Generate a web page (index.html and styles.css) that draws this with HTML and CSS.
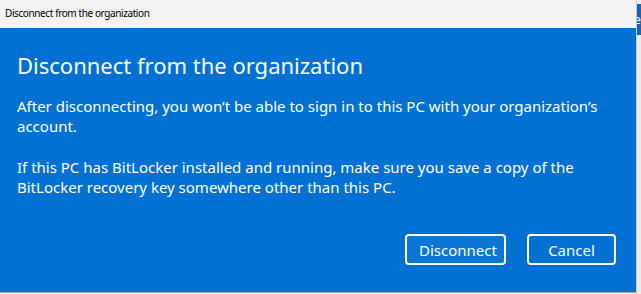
FILE: index.html
```html
<!DOCTYPE html>
<html lang="en">
<head>
    <meta charset="UTF-8">
    <meta name="viewport" content="width=device-width, initial-scale=1.0">
    <title>Disconnect from the organization</title>
    <link rel="stylesheet" href="styles.css">
</head>
<body>
    <div class="screen">
        <div class="window">
            <div class="title-bar">Disconnect from the organization</div>
            <div class="dialog">
                <h1>Disconnect from the organization</h1>
                <p>After disconnecting, you won’t be able to sign in to this PC with your organization’s account.</p>
                <p>If this PC has BitLocker installed and running, make sure you save a copy of the BitLocker recovery key somewhere other than this PC.</p>
                <div class="actions">
                    <button class="btn btn-primary">Disconnect</button>
                    <button class="btn">Cancel</button>
                </div>
            </div>
        </div>
        <div class="behind">
            <div class="behind-tab">e</div>
        </div>
    </div>
</body>
</html>
```

FILE: styles.css
```css
body {
    margin: 0;
    background-color: #f0f0f0;
    font-family: "Segoe UI", "Noto Sans", Arial, sans-serif;
}

.screen {
    display: flex;
    width: 641px;
    height: 294px;
    overflow: hidden;
}

.window {
    width: 637px;
    height: 292px;
    display: flex;
    flex-direction: column;
    border-bottom: 1px solid #a8a8a8;
}

.title-bar {
    height: 28px;
    line-height: 26px;
    padding-left: 5px;
    background-color: #f3f3f3;
    color: #000;
    font-size: 10px;
    letter-spacing: -0.4px;
}

.dialog {
    flex: 1;
    background-color: #0071d3;
    color: #fff;
    padding: 22px 20px 0 17px;
    display: flex;
    flex-direction: column;
}

h1 {
    margin: 0 0 16px;
    font-size: 22px;
    font-weight: 400;
    line-height: 30px;
}

p {
    margin: 0 0 21px;
    font-size: 15px;
    line-height: 20px;
}

.actions {
    display: flex;
    justify-content: flex-end;
    gap: 21px;
    margin-top: 16px;
}

.btn {
    height: 31px;
    border: 2px solid #fff;
    border-radius: 4px;
    background-color: transparent;
    color: #fff;
    font-family: inherit;
    font-size: 15px;
    padding: 0 12px;
}

.btn-primary {
    width: 101px;
    background-color: #0a76d6;
}

.btn:last-child {
    width: 89px;
}

.behind {
    width: 4px;
    border-left: 1px solid #c8c8c8;
    background-color: #ececec;
}

.behind-tab {
    margin-top: 4px;
    height: 31px;
    background-color: #1a64b0;
    color: #fff;
    font-size: 12px;
    line-height: 31px;
    overflow: hidden;
    text-indent: -3px;
}
```
